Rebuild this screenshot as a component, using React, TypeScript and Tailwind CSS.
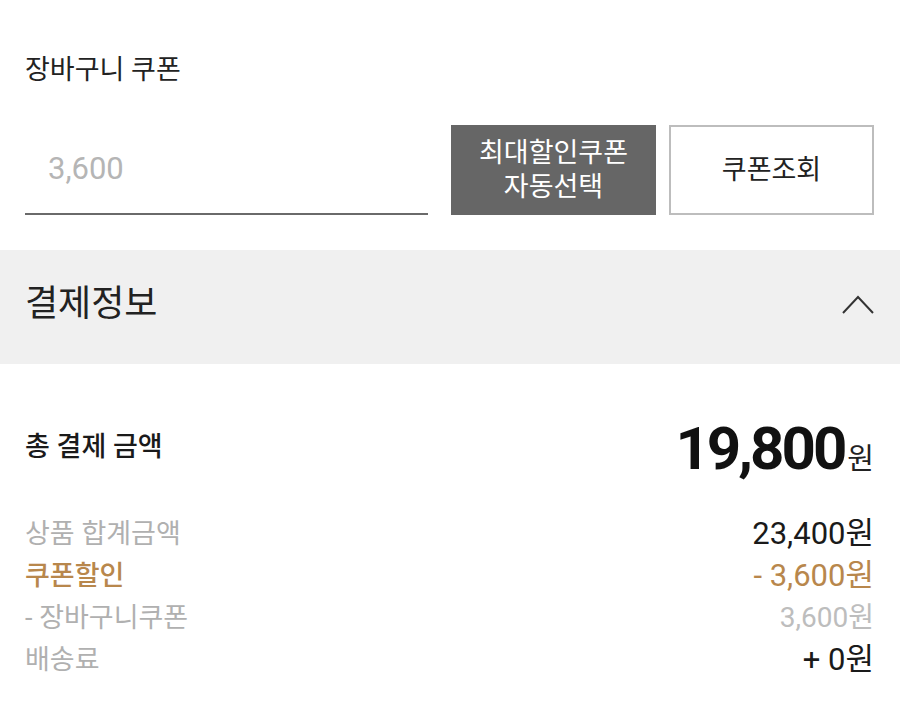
import React from 'react';

const font = "font-['Roboto','Noto_Sans_CJK_KR',sans-serif]";

interface RowProps {
  label: string;
  value: string;
  labelClass: string;
  valueClass: string;
}

const Row: React.FC<RowProps> = ({ label, value, labelClass, valueClass }) => (
  <div className="flex items-center justify-between h-[42px]">
    <span className={`text-[27px] leading-[42px] ${labelClass}`}>{label}</span>
    <span className={`leading-[42px] ${valueClass}`}>{value}</span>
  </div>
);

export default function App() {
  return (
    <div className={`w-[900px] h-[714px] bg-white overflow-hidden ${font}`}>
      {/* 장바구니 쿠폰 */}
      <div className="px-[25px] pt-[52px] pr-[26px]">
        <p className="text-[27px] leading-[36px] text-[#222]">장바구니 쿠폰</p>
        <div className="flex items-stretch h-[90px] mt-[37px]">
          <div className="flex-1 flex items-center border-b-2 border-[#6a6a6a] pl-[23px]">
            <span className="text-[31px] text-[#b5b5b5]">3,600</span>
          </div>
          <button className="w-[205px] ml-[23px] bg-[#666666] text-white text-[27px] leading-[34px] flex flex-col items-center justify-center">
            <span>최대할인쿠폰</span>
            <span>자동선택</span>
          </button>
          <button className="w-[205px] ml-[13px] bg-white border-2 border-[#bdbdbd] text-[27px] text-[#222] flex items-center justify-center">
            쿠폰조회
          </button>
        </div>
      </div>

      {/* 결제정보 header */}
      <div className="mt-[35px] h-[114px] bg-[#f0f0f0] flex items-center justify-between pl-[25px] pr-[26px]">
        <span className="text-[36px] text-[#222] pb-[6px]">결제정보</span>
        <svg width="32" height="19" viewBox="0 0 32 19" className="mb-[6px]">
          <polyline points="1,18 16,2 31,18" fill="none" stroke="#333" strokeWidth="2" />
        </svg>
      </div>

      {/* 총 결제 금액 */}
      <div className="pl-[25px] pr-[26px]">
        <div className="flex items-center justify-between h-[70px] mt-[50px]">
          <span className="text-[27px] font-medium text-[#1a1a1a] -mt-[4px]">총 결제 금액</span>
          <div className="flex items-baseline">
            <span className="text-[60px] leading-[70px] font-bold tracking-[-3px] text-[#111]">19,800</span>
            <span className="text-[29px] ml-[3px] text-[#222]">원</span>
          </div>
        </div>

        <div className="mt-[29px]">
          <Row label="상품 합계금액" value="23,400원" labelClass="text-[#b0b0b0]" valueClass="text-[31px] text-[#1a1a1a]" />
          <Row label="쿠폰할인" value="- 3,600원" labelClass="text-[#b8874c] font-medium" valueClass="text-[31px] text-[#b8874c]" />
          <Row label="- 장바구니쿠폰" value="3,600원" labelClass="text-[#b0b0b0]" valueClass="text-[28px] text-[#bdbdbd]" />
          <Row label="배송료" value="+ 0원" labelClass="text-[#b0b0b0]" valueClass="text-[31px] text-[#1a1a1a]" />
        </div>
      </div>
    </div>
  );
}
